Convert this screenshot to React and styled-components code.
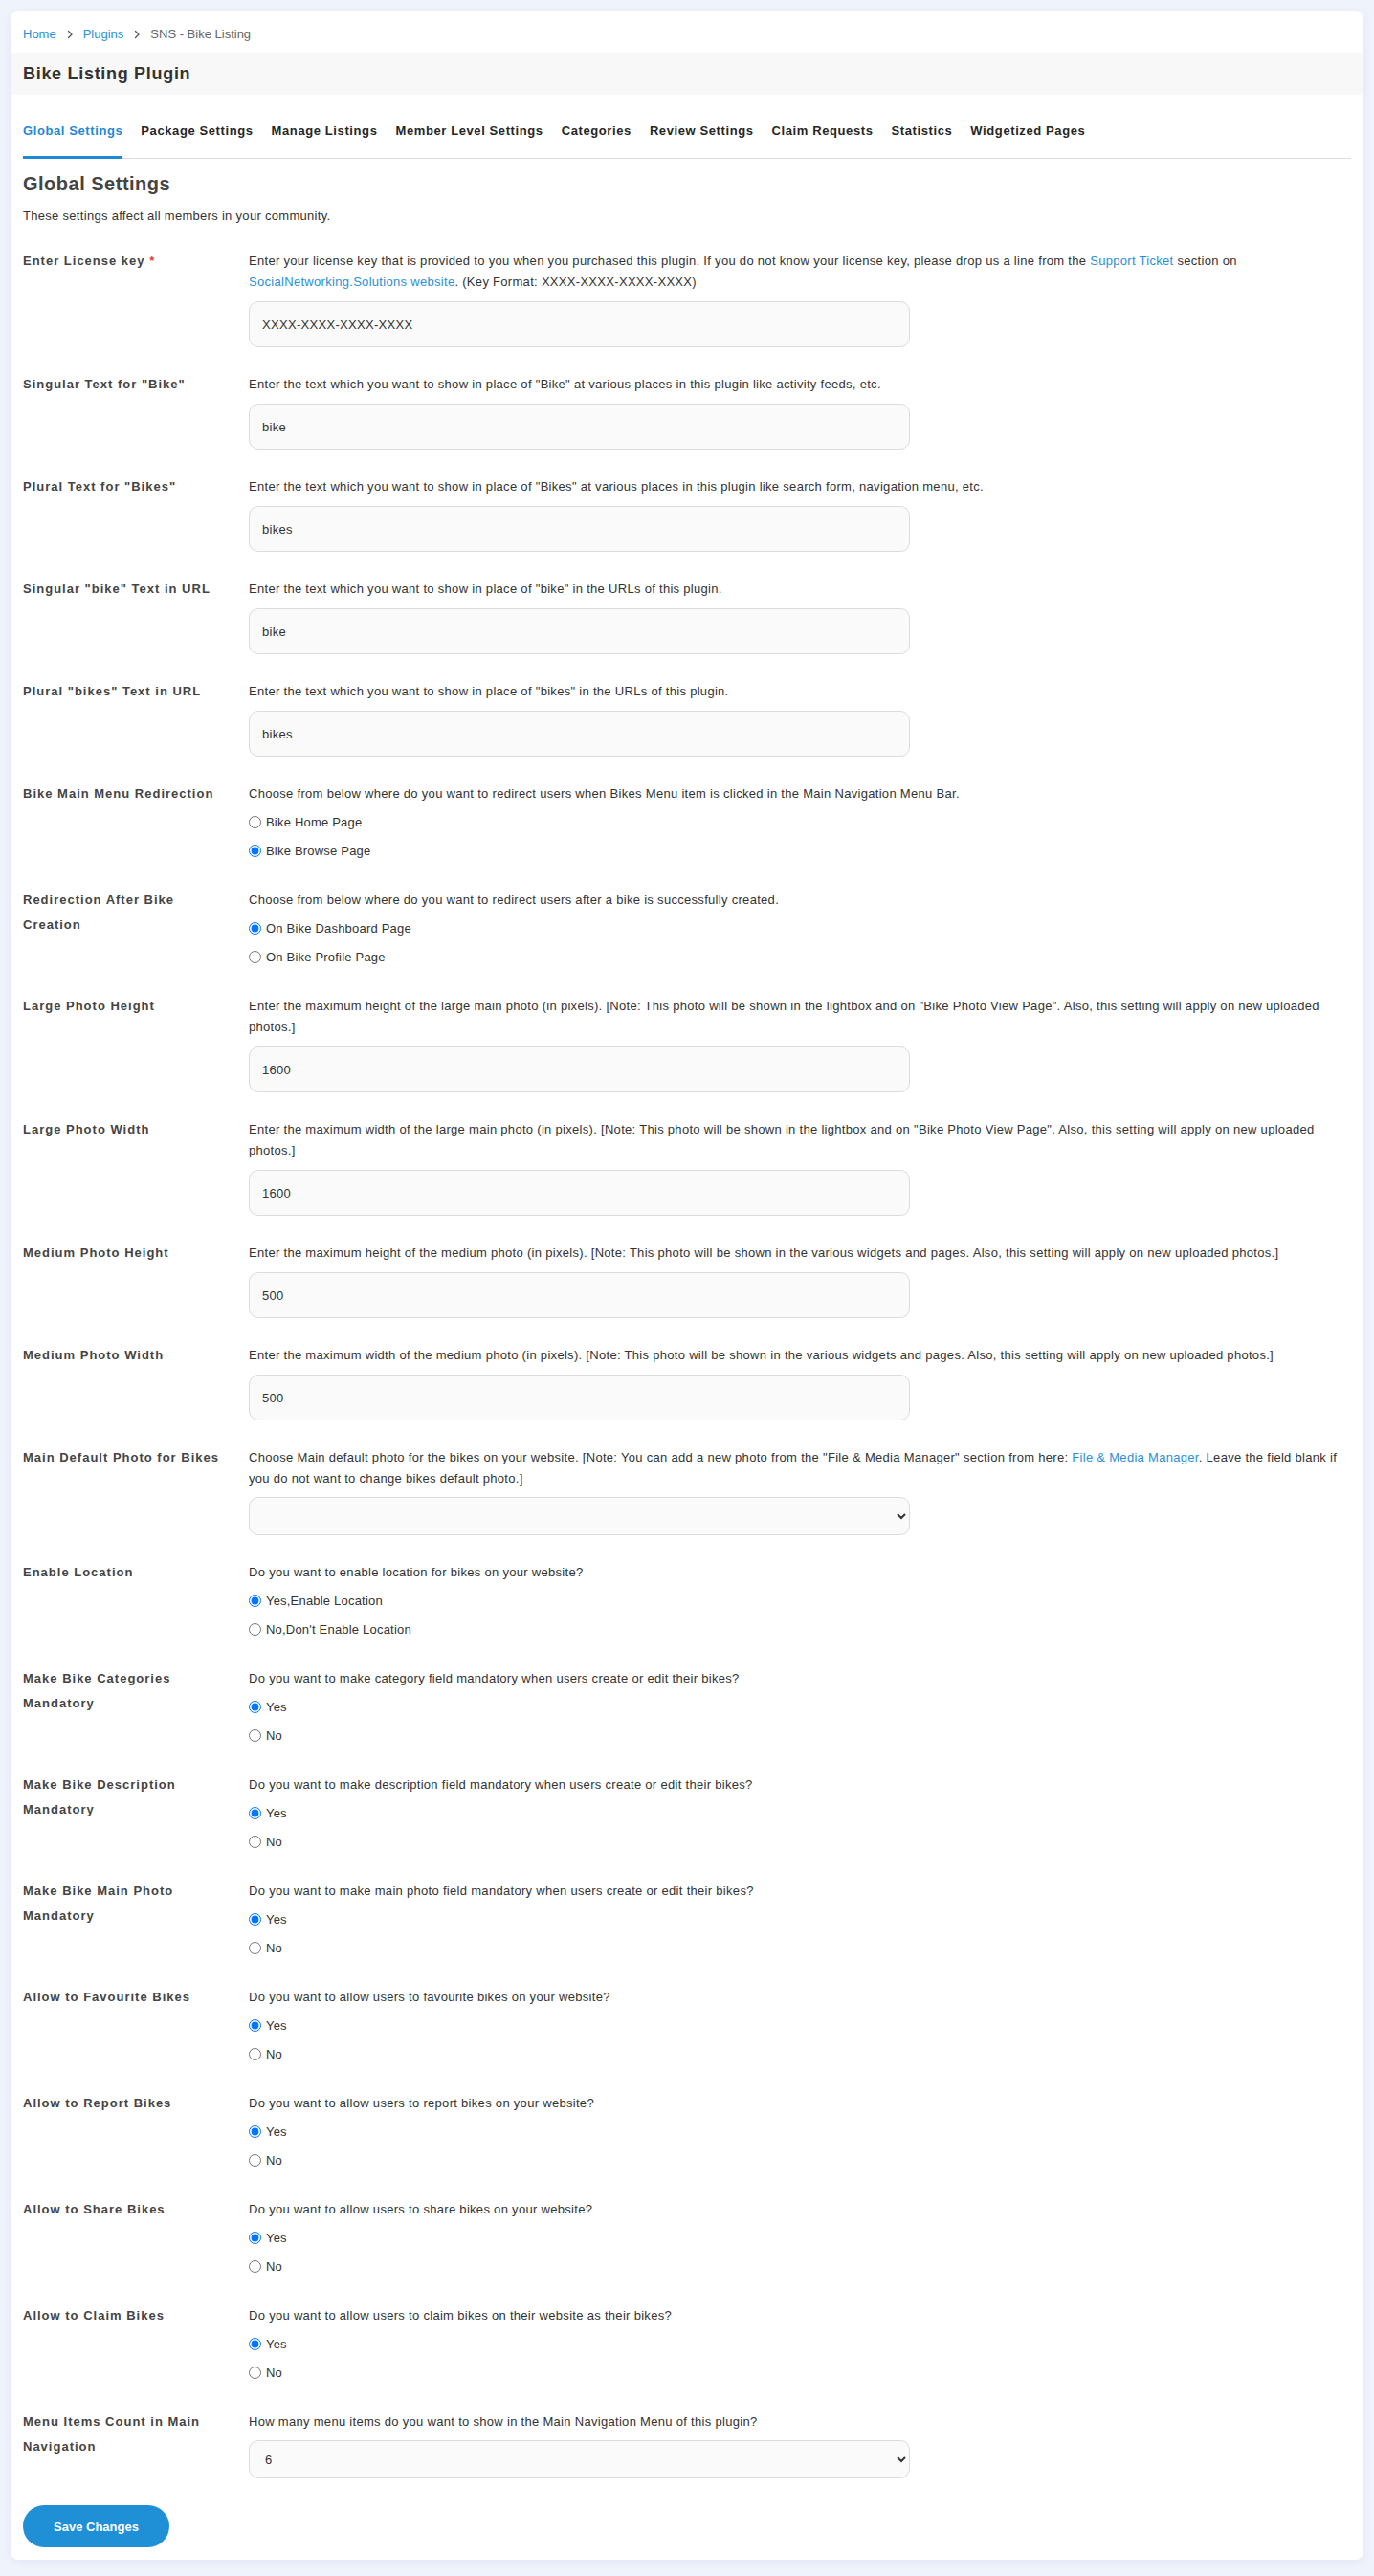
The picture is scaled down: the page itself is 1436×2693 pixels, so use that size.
import React from 'react'
import styled, { createGlobalStyle } from 'styled-components'

const GlobalStyle = createGlobalStyle`
  body {
    margin: 0;
    background: #eff3fb;
    font-family: 'Liberation Sans', Arial, sans-serif;
    color: #333;
  }
`

const Page = styled.div`
  padding: 12px 11px 14px 11px;
`

const Card = styled.section`
  background: #fff;
  border-radius: 8px;
  box-shadow: 0 2px 10px rgba(120, 140, 190, 0.12);
  padding: 16px 13px 13px 13px;
`

const Breadcrumb = styled.nav`
  display: flex;
  align-items: center;
  gap: 8px;
  font-size: 13px;
  line-height: 16px;
  color: #666;

  a {
    color: #2a8fd8;
    text-decoration: none;
  }

  svg {
    color: #555;
  }
`

const TitleBand = styled.div`
  background: #f8f8f8;
  margin: 11px -13px 0 -13px;
  padding: 0 13px;
  height: 44px;
  display: flex;
  align-items: center;

  h2 {
    margin: 0;
    font-size: 18px;
    font-weight: bold;
    letter-spacing: 0.7px;
    color: #333;
  }
`

const TabBar = styled.div`
  display: flex;
  gap: 19px;
  margin-top: 30px;
  border-bottom: 1px solid #ddd;
`

const Tab = styled.a`
  font-size: 13px;
  line-height: 16px;
  font-weight: bold;
  letter-spacing: 0.6px;
  color: ${p => (p.$active ? '#1f89d4' : '#262626')};
  padding-bottom: 18px;
  margin-bottom: -1px;
  border-bottom: 3px solid ${p => (p.$active ? '#1f89d4' : 'transparent')};
  cursor: pointer;
`

const Heading = styled.h1`
  margin: 14px 0 0 0;
  font-size: 20px;
  line-height: 24px;
  letter-spacing: 0.5px;
  color: #444;
`

const Intro = styled.p`
  margin: 12px 0 26px 0;
  font-size: 13px;
  line-height: 20px;
  letter-spacing: 0.3px;
  color: #333;
`

const Row = styled.div`
  display: grid;
  grid-template-columns: 220px 1fr;
  column-gap: 16px;
  padding-bottom: 28px;
`

const Label = styled.div`
  font-size: 13px;
  line-height: 26px;
  margin-top: -2px;
  font-weight: bold;
  letter-spacing: 1px;
  color: #444;

  span {
    color: #e0403a;
  }
`

const Desc = styled.div`
  font-size: 13px;
  line-height: 22px;
  letter-spacing: 0.3px;
  color: #333;

  a {
    color: #2a8fd8;
    text-decoration: none;
  }
`

const TextInput = styled.input`
  display: block;
  box-sizing: border-box;
  width: 60%;
  height: 48px;
  margin-top: 9px;
  padding: 0 13px;
  border: 1px solid #dcdcdc;
  border-radius: 10px;
  background: #fafafa;
  font-family: inherit;
  font-size: 13px;
  letter-spacing: 0.3px;
  color: #333;
  outline: none;
`

const Select = styled.select`
  display: block;
  box-sizing: border-box;
  width: 60%;
  height: 40px;
  margin-top: 8px;
  padding: 0 12px;
  border: 1px solid #dcdcdc;
  border-radius: 10px;
  background: #fafafa;
  font-family: inherit;
  font-size: 13px;
  color: #333;
  outline: none;
`

const Option = styled.label`
  display: flex;
  align-items: center;
  gap: 5px;
  height: 24.5px;
  margin-top: 6px;
  font-size: 13px;
  letter-spacing: 0.2px;
  color: #333;

  input {
    margin: 0;
    width: 13px;
    height: 13px;
  }
`

const SaveButton = styled.button`
  width: 153px;
  height: 44px;
  border: none;
  border-radius: 22px;
  background: #1f8fd6;
  color: #fff;
  font-family: inherit;
  font-size: 13px;
  font-weight: bold;
  cursor: pointer;
`

const Chevron = () => (
  <svg width="12" height="12" viewBox="0 0 24 24" fill="none" stroke="currentColor" strokeWidth="2.5" strokeLinecap="round" strokeLinejoin="round">
    <path d="M9 5l7 7-7 7" />
  </svg>
)

const tabs = [
  'Global Settings',
  'Package Settings',
  'Manage Listings',
  'Member Level Settings',
  'Categories',
  'Review Settings',
  'Claim Requests',
  'Statistics',
  'Widgetized Pages',
]

const yesNo = ['Yes', 'No']

const fields = [
  {
    label: 'Enter License key',
    required: true,
    desc: (
      <>
        Enter your license key that is provided to you when you purchased this plugin. If you do not know your license key, please drop us a line from the <a href="#">Support Ticket</a> section on <a href="#">SocialNetworking.Solutions website</a>. (Key Format: XXXX-XXXX-XXXX-XXXX)
      </>
    ),
    value: 'XXXX-XXXX-XXXX-XXXX',
  },
  {
    label: 'Singular Text for "Bike"',
    desc: 'Enter the text which you want to show in place of "Bike" at various places in this plugin like activity feeds, etc.',
    value: 'bike',
  },
  {
    label: 'Plural Text for "Bikes"',
    desc: 'Enter the text which you want to show in place of "Bikes" at various places in this plugin like search form, navigation menu, etc.',
    value: 'bikes',
  },
  {
    label: 'Singular "bike" Text in URL',
    desc: 'Enter the text which you want to show in place of "bike" in the URLs of this plugin.',
    value: 'bike',
  },
  {
    label: 'Plural "bikes" Text in URL',
    desc: 'Enter the text which you want to show in place of "bikes" in the URLs of this plugin.',
    value: 'bikes',
  },
  {
    label: 'Bike Main Menu Redirection',
    desc: 'Choose from below where do you want to redirect users when Bikes Menu item is clicked in the Main Navigation Menu Bar.',
    options: ['Bike Home Page', 'Bike Browse Page'],
    checked: 1,
  },
  {
    label: 'Redirection After Bike Creation',
    desc: 'Choose from below where do you want to redirect users after a bike is successfully created.',
    options: ['On Bike Dashboard Page', 'On Bike Profile Page'],
    checked: 0,
  },
  {
    label: 'Large Photo Height',
    desc: 'Enter the maximum height of the large main photo (in pixels). [Note: This photo will be shown in the lightbox and on "Bike Photo View Page". Also, this setting will apply on new uploaded photos.]',
    value: '1600',
  },
  {
    label: 'Large Photo Width',
    desc: 'Enter the maximum width of the large main photo (in pixels). [Note: This photo will be shown in the lightbox and on "Bike Photo View Page". Also, this setting will apply on new uploaded photos.]',
    value: '1600',
  },
  {
    label: 'Medium Photo Height',
    desc: 'Enter the maximum height of the medium photo (in pixels). [Note: This photo will be shown in the various widgets and pages. Also, this setting will apply on new uploaded photos.]',
    value: '500',
  },
  {
    label: 'Medium Photo Width',
    desc: 'Enter the maximum width of the medium photo (in pixels). [Note: This photo will be shown in the various widgets and pages. Also, this setting will apply on new uploaded photos.]',
    value: '500',
  },
  {
    label: 'Main Default Photo for Bikes',
    desc: (
      <>
        Choose Main default photo for the bikes on your website. [Note: You can add a new photo from the "File &amp; Media Manager" section from here: <a href="#">File &amp; Media Manager</a>. Leave the field blank if you do not want to change bikes default photo.]
      </>
    ),
    select: [''],
  },
  {
    label: 'Enable Location',
    desc: 'Do you want to enable location for bikes on your website?',
    options: ['Yes,Enable Location', "No,Don't Enable Location"],
    checked: 0,
  },
  {
    label: 'Make Bike Categories Mandatory',
    desc: 'Do you want to make category field mandatory when users create or edit their bikes?',
    options: yesNo,
    checked: 0,
  },
  {
    label: 'Make Bike Description Mandatory',
    desc: 'Do you want to make description field mandatory when users create or edit their bikes?',
    options: yesNo,
    checked: 0,
  },
  {
    label: 'Make Bike Main Photo Mandatory',
    desc: 'Do you want to make main photo field mandatory when users create or edit their bikes?',
    options: yesNo,
    checked: 0,
  },
  {
    label: 'Allow to Favourite Bikes',
    desc: 'Do you want to allow users to favourite bikes on your website?',
    options: yesNo,
    checked: 0,
  },
  {
    label: 'Allow to Report Bikes',
    desc: 'Do you want to allow users to report bikes on your website?',
    options: yesNo,
    checked: 0,
  },
  {
    label: 'Allow to Share Bikes',
    desc: 'Do you want to allow users to share bikes on your website?',
    options: yesNo,
    checked: 0,
  },
  {
    label: 'Allow to Claim Bikes',
    desc: 'Do you want to allow users to claim bikes on their website as their bikes?',
    options: yesNo,
    checked: 0,
  },
  {
    label: 'Menu Items Count in Main Navigation',
    desc: 'How many menu items do you want to show in the Main Navigation Menu of this plugin?',
    select: ['1', '2', '3', '4', '5', '6', '7', '8', '9', '10'],
    selected: '6',
  },
]

function Field({ field, index }) {
  if (field.options) {
    return field.options.map((opt, i) => (
      <Option key={opt}>
        <input type="radio" name={'field' + index} defaultChecked={i === field.checked} />
        {opt}
      </Option>
    ))
  }
  if (field.select) {
    return (
      <Select defaultValue={field.selected || ''}>
        {field.select.map(o => (
          <option key={o} value={o}>{o}</option>
        ))}
      </Select>
    )
  }
  return <TextInput type="text" defaultValue={field.value} />
}

export default function App() {
  return (
    <Page>
      <GlobalStyle />
      <Card>
        <Breadcrumb>
          <a href="#">Home</a>
          <Chevron />
          <a href="#">Plugins</a>
          <Chevron />
          <span>SNS - Bike Listing</span>
        </Breadcrumb>

        <TitleBand>
          <h2>Bike Listing Plugin</h2>
        </TitleBand>

        <TabBar>
          {tabs.map((t, i) => (
            <Tab key={t} $active={i === 0}>{t}</Tab>
          ))}
        </TabBar>

        <Heading>Global Settings</Heading>
        <Intro>These settings affect all members in your community.</Intro>

        {fields.map((f, i) => (
          <Row key={f.label}>
            <Label>
              {f.label}
              {f.required && <span> *</span>}
            </Label>
            <div>
              <Desc>{f.desc}</Desc>
              <Field field={f} index={i} />
            </div>
          </Row>
        ))}

        <SaveButton type="button">Save Changes</SaveButton>
      </Card>
    </Page>
  )
}
